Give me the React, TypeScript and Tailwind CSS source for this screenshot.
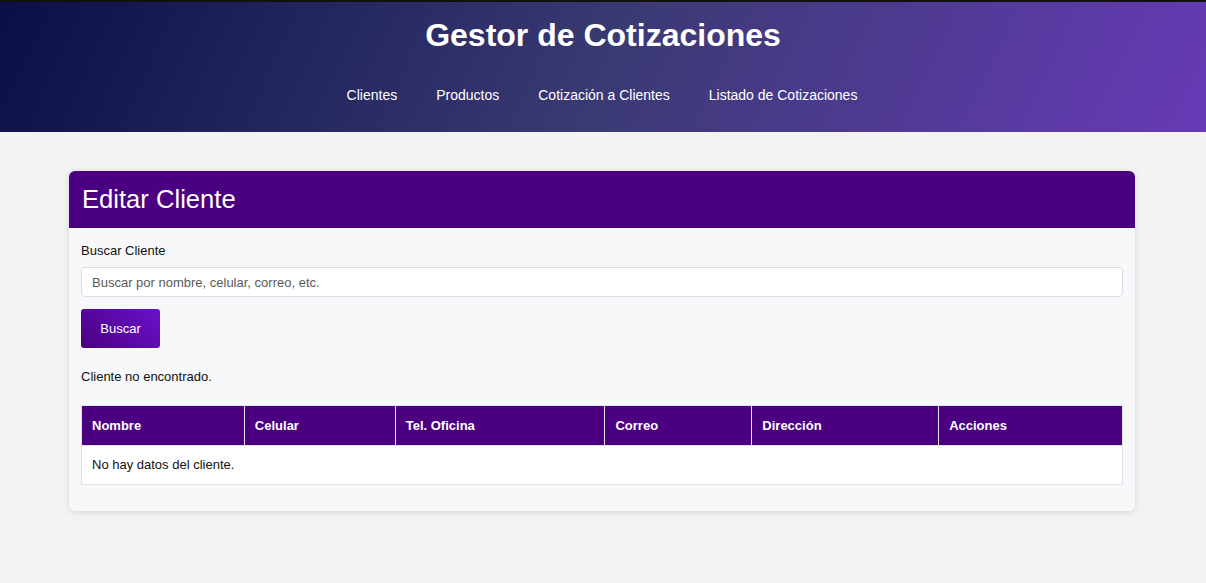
export default function App() {
  const cols = [
    { name: "Nombre", w: "w-[163px]" },
    { name: "Celular", w: "w-[151px]" },
    { name: "Tel. Oficina", w: "w-[210px]" },
    { name: "Correo", w: "w-[147px]" },
    { name: "Dirección", w: "w-[187px]" },
    { name: "Acciones", w: "w-[184px]" },
  ];

  return (
    <div className="min-h-[583px] bg-[#f3f3f3] font-['Liberation_Sans',Arial,sans-serif] text-[#111]">
      {/* Encabezado */}
      <header className="h-[132px] border-t-2 border-[#111] bg-[linear-gradient(115deg,#0a0f48_0%,#3a3a73_50%,#673ab7_100%)] text-white">
        <h1 className="pt-[15px] text-center text-[32px] font-bold leading-[37px]">Gestor de Cotizaciones</h1>
        <nav className="mt-[33px] flex justify-center gap-[39px] pr-[2px] text-[14px] leading-[16px]">
          <a href="#">Clientes</a>
          <a href="#">Productos</a>
          <a href="#">Cotización a Clientes</a>
          <a href="#">Listado de Cotizaciones</a>
        </nav>
      </header>

      <main className="pl-[69px] pr-[71px] pt-[39px]">
        <div className="overflow-hidden rounded-[6px] bg-[#f7f8fa] shadow-[0_1px_6px_rgba(0,0,0,0.12)]">
          <div className="flex h-[57px] items-center bg-[#4b0082] px-[13px] text-[25.6px] text-white">
            Editar Cliente
          </div>
          <div className="px-[12px] pt-[15px] pb-[26px]">
            <label className="block text-[13px] leading-[16px]">Buscar Cliente</label>
            <input
              type="text"
              placeholder="Buscar por nombre, celular, correo, etc."
              className="mt-[8px] block h-[30px] w-full rounded-[4px] border border-[#d9dde3] bg-white px-[10px] text-[13px] placeholder:text-[#595959] outline-none"
            />
            <button className="mt-[12px] h-[39px] w-[79px] rounded-[3px] bg-[linear-gradient(45deg,#4b0082,#6a11cb)] text-[13px] text-white">
              Buscar
            </button>
            <p className="mt-[21px] text-[13px] leading-[16px]">Cliente no encontrado.</p>

            <table className="mt-[20px] w-full border-collapse text-[13px]">
              <thead>
                <tr className="h-[40px] bg-[#4b0082] text-left text-white">
                  {cols.map((c) => (
                    <th
                      key={c.name}
                      className={`${c.w} border border-[#e2e5ea] px-[10px] font-bold`}
                    >
                      {c.name}
                    </th>
                  ))}
                </tr>
              </thead>
              <tbody>
                <tr className="h-[39px] bg-white">
                  <td colSpan={6} className="border border-[#dde1e7] px-[10px]">
                    No hay datos del cliente.
                  </td>
                </tr>
              </tbody>
            </table>
          </div>
        </div>
      </main>
    </div>
  );
}
